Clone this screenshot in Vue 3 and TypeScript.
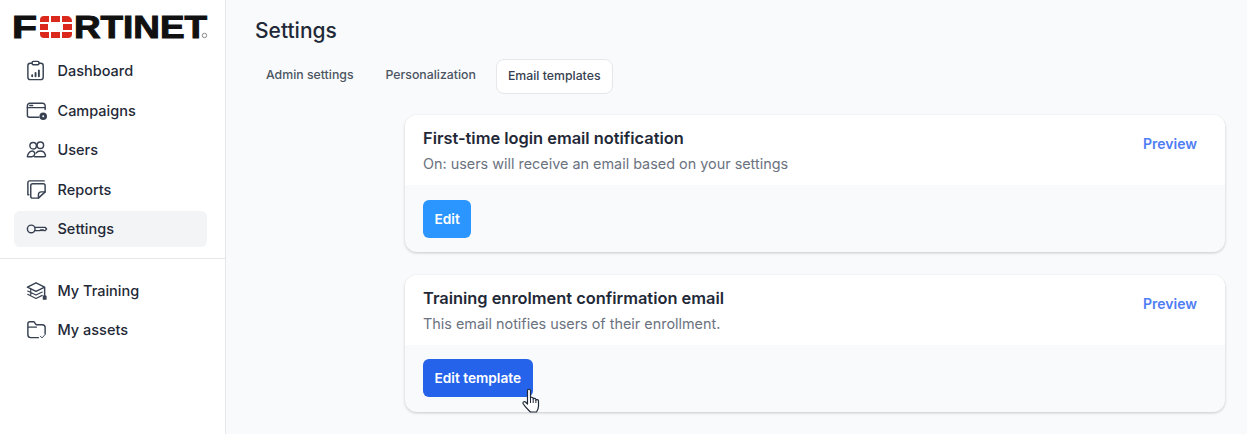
<script setup lang="ts">
const topItems = [
  { label: 'Dashboard', icon: 'dashboard' },
  { label: 'Campaigns', icon: 'campaigns' },
  { label: 'Users', icon: 'users' },
  { label: 'Reports', icon: 'reports' },
  { label: 'Settings', icon: 'settings', active: true },
]
const bottomItems = [
  { label: 'My Training', icon: 'training' },
  { label: 'My assets', icon: 'assets' },
]
const tabs = ['Admin settings', 'Personalization', 'Email templates']
</script>

<template>
  <div class="page">
    <aside class="sidebar">
      <div class="logo">
        <svg width="200" height="30" viewBox="0 0 200 30">
          <text class="logo-text" x="-2" y="24" textLength="25" lengthAdjust="spacingAndGlyphs">F</text>
          <path fill="#da291c" d="M26 6a4 4 0 0 1 4-4h5v6h-9zM37 2h9v6h-9zM48 2h5a5 5 0 0 1 5 5v1H48zM26 10h8v6h-8zM49 10h9v6h-9zM26 18h9v6h-5a4 4 0 0 1-4-4zM37 18h9v6h-9zM48 18h10v2a4 4 0 0 1-4 4h-6z" />
          <text class="logo-text" x="60" y="24" textLength="133" lengthAdjust="spacingAndGlyphs">RTINET</text>
          <circle cx="190.500" cy="21.500" r="2.200" fill="none" stroke="#888" stroke-width="1" />
        </svg>
      </div>
      <nav class="nav">
        <a v-for="item in topItems" :key="item.label" class="nav-item" :class="{ active: item.active }">
          <svg class="nav-icon" width="24" height="24" viewBox="0 0 24 24">
            <template v-if="item.icon === 'dashboard'">
              <rect x="3" y="4.500" width="16" height="17" rx="2.500" />
              <rect x="7.500" y="2.500" width="7" height="3.500" rx="1" class="white" />
              <path d="M7.500 18v-1M11 18v-3.500M14.500 18v-6" stroke-width="2" />
            </template>
            <template v-else-if="item.icon === 'campaigns'">
              <path d="M21 11V7a2.500 2.500 0 0 0-2.500-2.500H5A2.500 2.500 0 0 0 2.500 7v10a2 2 0 0 0 2 2h10" />
              <path d="M2.500 9h18.500M5 6.800h3" />
              <circle cx="19" cy="18" r="3.200" fill="#374151" />
              <circle cx="19" cy="18" r="1" fill="#fff" stroke="none" />
            </template>
            <template v-else-if="item.icon === 'users'">
              <circle cx="8.500" cy="8" r="3.400" />
              <circle cx="16" cy="7.500" r="3.400" />
              <path d="M2.500 19.500c0-1.500 1.500-6 5-6 2 0 3 2 2.500 4-.4 1.500-1.500 2-3 2z" />
              <path d="M10 19.500h10c1.300 0 1.500-1 1.200-2-.7-2.500-2.700-4-5.200-4-2 0-3.500.8-4.500 2.200" />
            </template>
            <template v-else-if="item.icon === 'reports'">
              <path d="M4 17.500H3V5a2 2 0 0 1 2-2h15" />
              <path d="M6 8a2 2 0 0 1 2-2h11a2 2 0 0 1 2 2v6.500L14 21H8a2 2 0 0 1-2-2z" />
              <path d="M21 14.500h-4a3 3 0 0 0-3 3V21" />
            </template>
            <template v-else>
              <circle cx="6.500" cy="12.500" r="4" />
              <path d="M10.500 10.800H21l1.500 1.700-1.500 1.700h-1.300l-1-1-1 1-1-1-1 1h-5.200" />
            </template>
          </svg>
          <span>{{ item.label }}</span>
        </a>
      </nav>
      <hr class="divider" />
      <nav class="nav">
        <a v-for="item in bottomItems" :key="item.label" class="nav-item">
          <svg class="nav-icon" width="24" height="24" viewBox="0 0 24 24">
            <template v-if="item.icon === 'training'">
              <path d="M11.500 4 2.500 8.500l9 4.500 9-4.500z" />
              <path d="M2.800 12.500l8.700 4.300 6.500-3.200M2.800 16l8.700 4.300 6.500-3.200M6 10.500v6" stroke-width="1.200" />
              <path d="M20.500 9v9" />
              <rect x="19.300" y="18" width="2.500" height="3" fill="#374151" />
            </template>
            <template v-else>
              <path d="M21 16.500V10a3 3 0 0 0-3-3h-6.500L9.500 4H5a2 2 0 0 0-2 2v11.500A3 3 0 0 0 6 20.500h8" />
              <path d="M3.500 9.500H12" stroke-width="1.200" />
              <path d="m16 19 1.800 1.800 3.200-3.600" stroke-width="1" />
            </template>
          </svg>
          <span>{{ item.label }}</span>
        </a>
      </nav>
    </aside>

    <main class="main">
      <h1 class="title">Settings</h1>
      <div class="tabs">
        <button v-for="(t, i) in tabs" :key="t" class="tab" :class="{ selected: i === 2 }">{{ t }}</button>
      </div>
      <div class="cards">
        <section class="card">
          <div class="card-head">
            <div>
              <h2>First-time login email notification</h2>
              <p>On: users will receive an email based on your settings</p>
            </div>
            <a class="preview">Preview</a>
          </div>
          <div class="card-foot">
            <button class="btn btn-light">Edit</button>
          </div>
        </section>
        <section class="card">
          <div class="card-head">
            <div>
              <h2>Training enrolment confirmation email</h2>
              <p>This email notifies users of their enrollment.</p>
            </div>
            <a class="preview">Preview</a>
          </div>
          <div class="card-foot second">
            <button class="btn btn-dark">
              Edit template
              <svg class="cursor" width="20" height="26" viewBox="0 0 20 26">
                <path d="M5.500 2.500c0-1.700 3-1.700 3 0V10c.2-1 2.500-1 2.700.2v.8c.2-1 2.500-1 2.700.3v.9c.3-1 2.400-.8 2.600.6V18c0 2.500-1 4.500-2 6H8.500C6 21.500 3 19 1.200 15.800c-.8-1.600 1-3 2.300-1.800l2 2z" fill="#fff" stroke="#1f2937" stroke-width="1.200" stroke-linejoin="round" />
                <path d="M8.500 10v5M11.200 11v4M13.900 12v3" stroke="#1f2937" stroke-width="1" fill="none" />
              </svg>
            </button>
          </div>
        </section>
      </div>
    </main>
  </div>
</template>

<style scoped>
.page {
  display: flex;
  width: 1247px;
  height: 434px;
  overflow: hidden;
  background: #f9fafb;
  font-family: Inter, "Liberation Sans", sans-serif;
  color: #1f2937;
}
.sidebar {
  width: 225px;
  flex: none;
  background: #fff;
  border-right: 1px solid #e5e7eb;
  box-sizing: content-box;
}
.logo {
  height: 40px;
  padding: 14px 0 0 14px;
  box-sizing: border-box;
  margin-bottom: 12.500px;
}
.logo svg { display: block; overflow: visible; }
.logo-text {
  font-family: "Liberation Sans", sans-serif;
  font-weight: 700;
  font-size: 30.500px;
  fill: #111;
  stroke: #111;
  stroke-width: 1px;
}
.nav {
  display: flex;
  flex-direction: column;
  gap: 3.500px;
  padding: 0 18px 0 14px;
}
.nav-item {
  display: flex;
  align-items: center;
  gap: 9.500px;
  height: 36px;
  padding-left: 11px;
  border-radius: 6px;
  font-size: 14.500px;
  font-weight: 500;
  color: #1f2937;
}
.nav-item.active { background: #f3f4f6; }
.nav-icon {
  flex: none;
  width: 23px;
  height: 23px;
  fill: none;
  stroke: #374151;
  stroke-width: 1.500;
  stroke-linecap: round;
  stroke-linejoin: round;
}
.white { fill: #fff; }
.divider {
  border: 0;
  border-top: 1px solid #e5e7eb;
  margin: 11px 0 13.500px;
}
.main {
  flex: 1;
  padding: 18px 22px 0 29px;
  min-width: 0;
}
.title {
  margin: 0;
  font-size: 21px;
  line-height: 26px;
  font-weight: 500;
  color: #1f2937;
}
.tabs {
  display: flex;
  align-items: center;
  gap: 8px;
  margin: 15px 0 0 -1px;
}
.tab {
  height: 35px;
  padding: 0 11px 2px;
  background: transparent;
  border: 1px solid transparent;
  border-radius: 8px;
  font: 500 12.300px Inter, "Liberation Sans", sans-serif;
  color: #4b5563;
  margin-top: -3px;
}
.tab.selected {
  background: #fff;
  border-color: #e5e7eb;
  color: #374151;
  margin-top: 0;
}
.cards {
  display: flex;
  flex-direction: column;
  gap: 23px;
  margin: 21px 0 0 150px;
}
.card {
  position: relative;
  border-radius: 12px;
  background: #f9fafb;
  box-shadow: 0 1px 3px rgba(0, 0, 0, 0.2);
}
.card-head {
  display: flex;
  justify-content: space-between;
  background: #fff;
  height: 70px;
  padding: 13px 28px 0 18px;
  box-sizing: border-box;
  border-radius: 12px 12px 0 0;
}
h2 {
  margin: 0;
  font-size: 16.400px;
  line-height: 20px;
  font-weight: 600;
  color: #1f2937;
}
p {
  margin: 7px 0 0;
  font-size: 14.400px;
  line-height: 18px;
  color: #6b7280;
}
.preview {
  font-size: 14px;
  font-weight: 600;
  line-height: 32px;
  color: #4f7df3;
}
.card-foot {
  height: 67px;
  padding: 15px 18px 0;
  box-sizing: border-box;
  border-radius: 0 0 12px 12px;
}
.card-foot.second { padding-top: 14px; }
.btn {
  position: relative;
  height: 38px;
  padding: 0 11.500px;
  border: 0;
  border-radius: 6px;
  font: 600 13.700px Inter, "Liberation Sans", sans-serif;
  color: #fff;
}
.btn-light { background: #2b96ff; }
.btn-dark { background: #2563eb; }
.cursor {
  position: absolute;
  left: 99px;
  top: 29px;
}
</style>
